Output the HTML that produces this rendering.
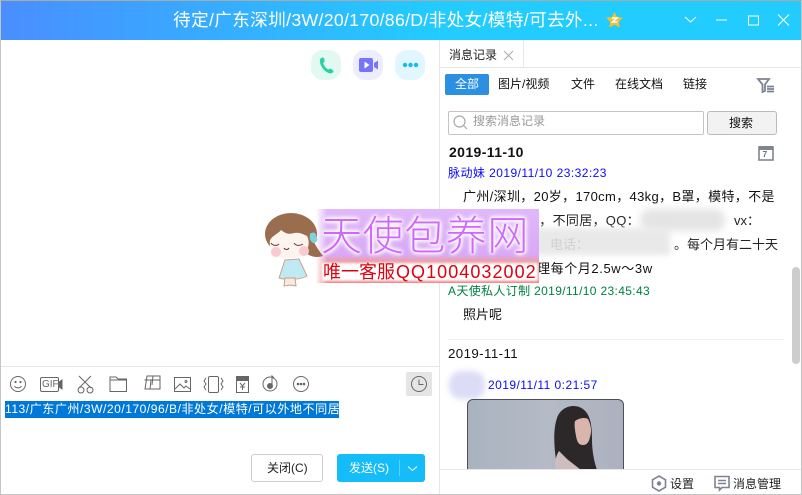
<!DOCTYPE html>
<html><head><meta charset="utf-8">
<style>
*{box-sizing:border-box;margin:0;padding:0}
html,body{width:802px;height:495px;overflow:hidden;background:#fff;font-family:"Liberation Sans","Noto Sans CJK SC",sans-serif}
.t{position:absolute;white-space:nowrap;font-size:12px;line-height:16px;color:#111}
.m{font-size:13px;line-height:17px}
.a{position:absolute}
svg{position:absolute;overflow:visible}
</style></head><body>
<div class="a" style="left:0;top:0;width:802px;height:495px;border:1px solid #c4c4c4;border-top-color:#aaa"></div>
<div class="a" style="left:1px;top:1px;width:800px;height:39px;background:linear-gradient(90deg,#4a8eff 0%,#22ccff 55%,#22ccff 100%)"></div>
<div class="t" style="left:173px;top:9px;font-size:17.7px;line-height:22px;letter-spacing:.3px;color:#fff">待定/广东深圳/3W/20/170/86/D/非处女/模特/可去外...</div>
<svg style="left:606px;top:12px" width="18" height="16" viewBox="0 0 18 16"><path d="M8.5 0L11 5l6 .8-4.300 4 1 5.700-5.200-2.700-5.200 2.700 1-5.700L0 5.800 6 5z" fill="#f5c02c"/><path d="M6 6h5L6.500 10H11.500" stroke="#fff" stroke-width="1.500" fill="none"/></svg>
<svg style="left:685px;top:15px" width="110" height="16" fill="none" stroke="#fff" stroke-width="1"><path d="M0 2l5.500 5L11 2"/><path d="M31 5h11"/><rect x="63.500" y="1" width="10" height="9"/><path d="M93 -.5l11 11M104 -.5L93 10.500"/></svg>

<!-- call buttons -->
<div class="a" style="left:311px;top:50px;width:30px;height:30px;border-radius:12px;background:#e2f9f2"></div>
<svg style="left:319px;top:57px" width="16" height="17" viewBox="0 0 16 17"><path d="M1 2.500C1.500 1 3 .5 4 .5c.7 0 1 .5 1.200 1.500l.5 2.500-1.500 1.500c.5 2.500 3 5.500 5 6.500l2-1 2.500 1.500c1 .7 1 1.500.3 2.300-.8.900-2 1.300-3.500 1C5.500 15 .2 8.500 1 2.500z" fill="#2bd0a4"/></svg>
<div class="a" style="left:353px;top:50px;width:30px;height:30px;border-radius:12px;background:#ededff"></div>
<svg style="left:359px;top:58px" width="20" height="14" viewBox="0 0 20 14"><rect width="14" height="14" rx="2" fill="#7474ff"/><path d="M5.500 3.500l5 3.500-5 3.500z" fill="#fff"/><path d="M15 5l4-2.500v9L15 9z" fill="#7474ff"/></svg>
<div class="a" style="left:395px;top:50px;width:30px;height:30px;border-radius:12px;background:#e2f6ff"></div>
<svg style="left:402px;top:62px" width="17" height="6"><circle cx="3" cy="3" r="2.200" fill="#14b8f5"/><circle cx="8.500" cy="3" r="2.200" fill="#14b8f5"/><circle cx="14" cy="3" r="2.200" fill="#14b8f5"/></svg>

<!-- divider lines -->
<div class="a" style="left:439px;top:40px;width:1px;height:454px;background:#e6e6e6"></div>
<div class="a" style="left:1px;top:366px;width:438px;height:1px;background:#e6e6e6"></div>

<!-- toolbar -->
<svg style="left:0;top:365px" width="330" height="40" fill="none" stroke="#666" stroke-width="1">
<circle cx="18" cy="19" r="7.500"/><path d="M14.500 21c1.500 2.500 5.500 2.500 7 0"/><circle cx="15.500" cy="17" r=".6" fill="#666"/><circle cx="20.500" cy="17" r=".6" fill="#666"/>
<rect x="40.500" y="12.500" width="18" height="14" rx="1.500"/><path d="M59 17l3-2v9l-3-2z" fill="#666"/>
<path d="M79 11l12 12M91 11L79 23"/><circle cx="81" cy="25" r="3"/><circle cx="90" cy="25" r="3"/>
<path d="M110 14.500v-2.500h6l2 2h8.500v12.500h-16.500z"/><path d="M110 15h16.500"/>
<path d="M147 11h13v13h-15z"/><path d="M144.500 15h15M151 15l-1 9M153 11l-1 9"/>
<rect x="174.500" y="12.500" width="16" height="14"/><path d="M175 24l5-5 4 4 2-2 4 3"/><circle cx="186" cy="16.500" r="1"/>
<rect x="208.500" y="11.500" width="10" height="16" rx="1.500"/><path d="M206 13l-2 3 2 3-2 3 2 3M221 13l2 3-2 3 2 3-2 3"/>
<rect x="236.500" y="11.500" width="12" height="16"/><rect x="236.500" y="11.500" width="12" height="4" fill="#666"/><path d="M240 18l2.500 3 2.500-3M242.500 21v4M240 22h5"/>
<circle cx="270" cy="19" r="7"/><circle cx="270" cy="21" r="2.500" fill="#666"/><path d="M272 20v-9l2 2"/>
<circle cx="301" cy="19" r="7.500"/><circle cx="298" cy="19" r=".8" fill="#666"/><circle cx="301" cy="19" r=".8" fill="#666"/><circle cx="304" cy="19" r=".8" fill="#666"/>
</svg>
<div class="t" style="left:42px;top:379px;font-size:10px;color:#666;line-height:11px">GIF</div>
<div class="a" style="left:406px;top:372px;width:26px;height:24px;border-radius:2px;background:#e5e5e5"></div>
<svg style="left:411px;top:376px" width="17" height="17" fill="none" stroke="#666"><circle cx="8" cy="8" r="7.500"/><path d="M8 3.500V8.500h4.500"/></svg>

<!-- input -->
<div class="a" style="left:5px;top:401px;width:334px;height:17px;background:#0078d7"></div>
<div class="t" style="left:5px;top:401px;font-size:12.1px;line-height:17px;letter-spacing:.5px;color:#fff">113/广东广州/3W/20/170/96/B/非处女/模特/可以外地不同居</div>

<!-- buttons -->
<div class="a" style="left:251px;top:454px;width:72px;height:28px;border:1px solid #ccc;border-radius:3px;background:#fff"></div>
<div class="t" style="left:267px;top:460px;color:#222">关闭(C)</div>
<div class="a" style="left:337px;top:454px;width:88px;height:28px;border-radius:3px;background:#14bcf8"></div>
<div class="t" style="left:349px;top:460px;color:#fff">发送(S)</div>
<div class="a" style="left:399px;top:460px;width:1px;height:16px;background:#5ed2fb"></div>
<svg style="left:407px;top:466px" width="11" height="6" fill="none" stroke="#fff"><path d="M1 .5l4.500 4 4.500-4"/></svg>

<!-- right tabs -->
<div class="t" style="left:449px;top:47px;color:#222">消息记录</div>
<svg style="left:504px;top:51px" width="9" height="9" stroke="#aaa" fill="none"><path d="M0 0l9 9M9 0L0 9"/></svg>
<div class="a" style="left:523px;top:40px;width:1px;height:27px;background:#e6e6e6"></div>
<div class="a" style="left:440px;top:67px;width:361px;height:1px;background:#e6e6e6"></div>
<div class="a" style="left:445px;top:74px;width:44px;height:21px;border-radius:2px;background:#2b8fe2"></div>
<div class="t" style="left:455px;top:76px;color:#fff">全部</div>
<div class="t" style="left:498px;top:76px">图片/视频</div>
<div class="t" style="left:571px;top:76px">文件</div>
<div class="t" style="left:615px;top:76px">在线文档</div>
<div class="t" style="left:683px;top:76px">链接</div>
<svg style="left:757px;top:78px" width="18" height="15" viewBox="0 0 18 15" fill="none" stroke="#7e8392" stroke-width="1.800"><path d="M1 1h11L8 6.500V13L5.500 14V6.500z"/><path d="M10 8.500h7M10 11h7M10 13.500h7"/></svg>

<!-- search -->
<div class="a" style="left:448px;top:111px;width:256px;height:24px;border:1px solid #c4c4c4;border-radius:2px;background:#fff"></div>
<svg style="left:453px;top:115px" width="15" height="15" fill="none" stroke="#aaa" stroke-width="1.200"><circle cx="6.500" cy="6.500" r="5.500"/><path d="M10.500 10.500l3.500 3.500"/></svg>
<div class="t" style="left:473px;top:113px;color:#999">搜索消息记录</div>
<div class="a" style="left:707px;top:111px;width:70px;height:24px;border:1px solid #bbb;border-radius:3px;background:#f2f2f2"></div>
<div class="t" style="left:729px;top:115px">搜索</div>

<!-- messages -->
<div class="t" style="left:449px;top:144px;font-weight:bold;font-size:14px;letter-spacing:.4px">2019-11-10</div>
<svg style="left:758px;top:145px" width="16" height="16" fill="none"><rect x="1" y="2" width="14" height="13" stroke="#80848f" stroke-width="1.600"/><rect x="1" y="1" width="14" height="4" fill="#80848f"/></svg>
<div class="t" style="left:762.500px;top:148px;font-size:8.500px;line-height:12px;color:#70747f;font-weight:bold">7</div>
<div class="t" style="left:448px;top:165px;color:#0a0aff;letter-spacing:.45px">脉动妹 2019/11/10 23:32:23</div>
<div class="t m" style="left:463px;top:188px;letter-spacing:.34px">广州/深圳，20岁，170cm，43kg，B罩，模特，不是</div>
<div class="t m" style="left:489px;top:212px;color:#444">可</div>
<div class="t m" style="left:526px;top:212px;color:#222;letter-spacing:.3px">地，不同居，QQ：</div>
<div class="t m" style="left:734px;top:212px;color:#222">vx：</div>
<div class="a" style="left:640px;top:209px;width:85px;height:22px;border-radius:10px;background:#e4e4e4;filter:blur(4px)"></div>
<div class="a" style="left:535px;top:228px;width:135px;height:27px;background:#e9e9e9;filter:blur(3px)"></div>
<div class="t m" style="left:550px;top:236px;color:#d0d0d0">电话：</div>
<div class="t m" style="left:674px;top:236px;color:#222">。每个月有二十天</div>
<div class="t m" style="left:537px;top:260px;letter-spacing:.6px">理每个月2.5w～3w</div>
<div class="t" style="left:448px;top:283px;color:#008040;letter-spacing:.35px">A天使私人订制 2019/11/10 23:45:43</div>
<div class="t m" style="left:463px;top:306px">照片呢</div>
<div class="a" style="left:448px;top:339px;width:336px;height:1px;background:#eef0f3"></div>
<div class="t" style="left:448px;top:346px;font-size:13.300px;letter-spacing:.4px">2019-11-11</div>
<div class="a" style="left:449px;top:371px;width:36px;height:28px;border-radius:12px;background:#dcdcf6;filter:blur(3px)"></div>
<div class="t" style="left:488px;top:377px;color:#0a0aff;letter-spacing:.45px">2019/11/11 0:21:57</div>

<!-- photo -->
<div class="a" style="left:467px;top:399px;width:157px;height:70px;overflow:hidden;border:1px solid #4d4f55;border-bottom:0;border-radius:6px 6px 0 0;background:linear-gradient(90deg,#a9b3bf,#b4bac6 50%,#adb1bf)">
<svg width="157" height="70" viewBox="0 0 157 70"><path d="M88 60c-2-14-3-30 1-42 4-12 18-15 26-9 8 6 9 18 9 30 0 12 2 22 5 31H94z" fill="#2c282a"/><path d="M107 21c4-3 10-4 13-2 3 6 4 12 2 18-1 5-3 8-7 8-5 0-6-4-7-9-1-6-2-11-1-15z" fill="#d9b5ad"/><path d="M88 70c-2-8 0-14 3-19l8 8 14 11z" fill="#cdbdbe"/></svg>
</div>

<!-- scrollbar -->
<div class="a" style="left:792px;top:267px;width:8px;height:97px;border-radius:4px;background:#cdcdcd"></div>

<!-- bottom bar -->
<div class="a" style="left:440px;top:469px;width:361px;height:1px;background:#e6e6e6"></div>
<svg style="left:651px;top:475px" width="16" height="17" fill="none"><path d="M8 1l6.500 3.800v7.400L8 16l-6.500-3.800V4.800z" stroke="#7e8392" stroke-width="1.600"/><circle cx="8" cy="8.500" r="2.200" fill="#7e8392"/></svg>
<div class="t" style="left:670px;top:476px;color:#222">设置</div>
<svg style="left:714px;top:475px" width="17" height="17" fill="none" stroke="#7e8392" stroke-width="1.600"><path d="M1 1.500h14v11H8L5.500 15v-2.500H1z"/><path d="M4 5.500h8M4 8.500h8"/></svg>
<div class="t" style="left:733px;top:476px;color:#222">消息管理</div>

<!-- watermark -->
<div class="a" style="left:316px;top:209px;width:223px;height:74px;background:linear-gradient(180deg,#e0b8fb 0%,#d9a9f6 62%,#f09c9c 72%,#f77a7a 100%);-webkit-mask-image:linear-gradient(90deg,transparent,#000 5%);mask-image:linear-gradient(90deg,transparent,#000 5%)"></div>
<div class="a" style="left:322px;top:263px;width:216px;height:18px;background:#fff;filter:blur(1.200px)"></div>
<div class="t" style="left:321px;top:211px;font-size:41px;line-height:50px;letter-spacing:.6px;color:#cf66ff;font-family:'Liberation Sans','Noto Sans CJK SC',sans-serif;font-weight:300;text-shadow:0 0 3px #fff,0 0 3px #fff,0 0 5px #fff,0 0 6px #fff,0 0 6px #fff">天使包养网</div>
<div class="t" style="left:323px;top:262px;font-size:18px;line-height:20px;color:#e00010;text-shadow:0 0 2px #fff">唯一客服<span style="letter-spacing:1.050px;margin-left:1px">QQ1004032002</span></div>
<svg style="left:263px;top:210px" width="62" height="80" viewBox="0 0 62 80">
<path d="M16 68l6-18 14-1 8 17c-7 4-21 4-28 2z" fill="#bfe9f3" stroke="#c8a48c"/>
<path d="M22 68l-1 8 6-1 6 1-1-8z" fill="#fbe9dd" stroke="#c3a28a"/>
<ellipse cx="28" cy="24" rx="26" ry="21" fill="#9a6d4e"/>
<path d="M48 26c4 9 8 15 12 20-6 2-12 1-17-3z" fill="#9a6d4e"/>
<path d="M7 30c3-5 8-6 11-10 4 3 7 5 13 3 5-1 9 1 13 3 3 5 2 13-3 18-4 4-21 6-29 2-4-3-6-10-5-16z" fill="#fdf4ee"/>
<circle cx="13" cy="42" r="5" fill="#fbc9d2"/><circle cx="41" cy="41" r="5" fill="#fbc9d2"/>
<path d="M8 33c2 3 6 3 8 1M31 33c2 3 6 3 9 1M21 38c1 2 4 2 5 0" stroke="#5c4034" fill="none"/>
<path d="M47 24c3-3 7-1 6 3 3 2 1 6-3 6-3-2-4-5-3-9z" fill="#7ed2d8"/>
</svg>
</body></html>
